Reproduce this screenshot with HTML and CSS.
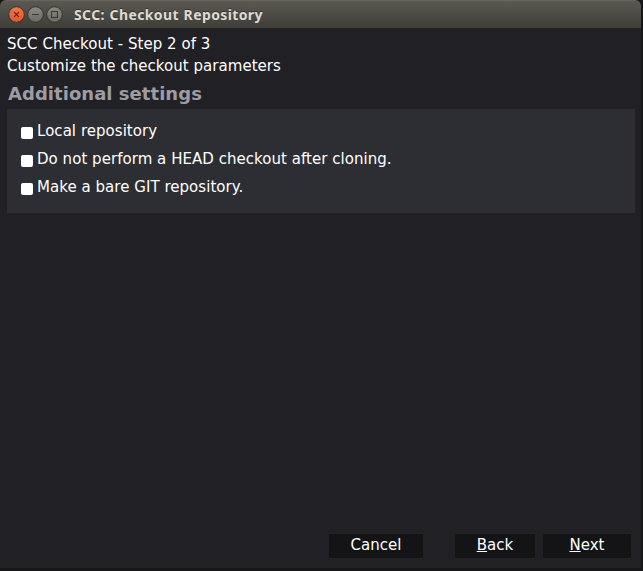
FILE: index.html
```
<!DOCTYPE html>
<html lang="en">
<head>
<meta charset="utf-8">
<title>SCC: Checkout Repository</title>
<link rel="stylesheet" href="styles.css">
</head>
<body>
<div class="window">
  <header class="titlebar">
    <svg class="controls" width="56" height="18" viewBox="0 0 56 18" aria-hidden="true">
      <defs>
        <linearGradient id="close" x2="0" y2="1"><stop stop-color="#f4764b"/><stop offset="1" stop-color="#e4572a"/></linearGradient>
        <linearGradient id="grey" x2="0" y2="1"><stop stop-color="#8b8982"/><stop offset="1" stop-color="#6b6963"/></linearGradient>
      </defs>
      <g stroke="#35342f">
        <circle cx="8.5" cy="8.5" r="7.8" fill="url(#close)"/>
        <circle cx="27.5" cy="8.5" r="7.8" fill="url(#grey)"/>
        <circle cx="46.5" cy="8.5" r="7.8" fill="url(#grey)"/>
      </g>
      <g fill="none" stroke="#3c3b37" stroke-width="1.1">
        <path d="M5.9 5.9l5.2 5.2M11.1 5.9l-5.2 5.2" stroke="#5c2613"/>
        <path d="M24 8.5h7"/>
        <rect x="43.5" y="5.5" width="6" height="6"/>
      </g>
    </svg>
    <h1 class="title">SCC: Checkout Repository</h1>
  </header>
  <main class="content">
    <p class="line">SCC Checkout - Step 2 of 3</p>
    <p class="line">Customize the checkout parameters</p>
    <h2 class="heading">Additional settings</h2>
    <section class="panel">
      <label class="option"><input class="box" type="checkbox"><span>Local repository</span></label>
      <label class="option"><input class="box" type="checkbox"><span>Do not perform a HEAD checkout after cloning.</span></label>
      <label class="option"><input class="box" type="checkbox"><span>Make a bare GIT repository.</span></label>
    </section>
  </main>
  <footer class="actions">
    <button class="button cancel">Cancel</button>
    <button class="button back"><u>B</u>ack</button>
    <button class="button next"><u>N</u>ext</button>
  </footer>
</div>
</body>
</html>
```
FILE: styles.css
```
* { box-sizing: border-box; }
body {
  margin: 0;
  height: 571px;
  padding: 0 2px 3px 0;
  overflow: hidden;
  background: #17171a;
  color: #fff;
  font: 15px/22px "DejaVu Sans", sans-serif;
  letter-spacing: 0.04px;
}
.window {
  display: flex;
  flex-direction: column;
  height: 568px;
  background: #212025;
  border-radius: 6px 6px 0 0;
  overflow: hidden;
}
.titlebar {
  display: flex;
  align-items: center;
  height: 28px;
  padding: 1px 0 0 8px;
  background: linear-gradient(#5b5951, #3e3d38);
  border-top: 1px solid #66645c;
}
.controls { flex: none; }
.title {
  margin: 0 0 0 10px;
  color: #dfdbd2;
  font: bold 14px/20px "Noto Sans", sans-serif;
  letter-spacing: 0.38px;
  word-spacing: 0.7px;
  text-shadow: 0 -1px #33322e;
}
.content { flex: 1; padding: 5px 6px 0 7px; }
.line { margin: 0; }
.heading {
  margin: 4px 0 0 1px;
  height: 28px;
  color: #9d9ca5;
  font: bold 18px/26px "DejaVu Sans", sans-serif;
}
.panel {
  height: 104px;
  padding: 8px 14px;
  background: #2d2e33;
}
.option { display: flex; align-items: center; height: 28px; gap: 4px; }
.option span { line-height: 20px; margin-top: -1px; }
.box {
  appearance: none;
  width: 12px;
  height: 12px;
  margin: 4px 0 0;
  border-radius: 2px;
  background: #fff;
}
.actions {
  display: flex;
  justify-content: flex-end;
  padding: 0 10px 10px 0;
}
.button {
  height: 24px;
  padding: 0 0 2px;
  border: 0;
  border-radius: 1px;
  background: #141416;
  color: #fff;
  font: inherit;
  letter-spacing: inherit;
}
.button u { text-underline-offset: 1px; text-decoration-thickness: 1px; }
.cancel { width: 94px; margin-right: 32px; }
.back { width: 80px; margin-right: 8px; }
.next { width: 88px; }
```
